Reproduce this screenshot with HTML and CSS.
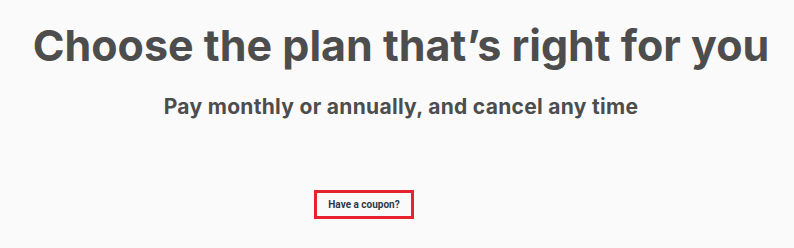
FILE: index.html
```html
<!DOCTYPE html>
<html lang="en">
<head>
  <meta charset="UTF-8" />
  <title>Pricing</title>
  <link rel="stylesheet" href="styles.css">
</head>
<body>
  <div class="pricing-header">
    <h1>Choose the plan that’s right for you</h1>
    <p class="subtitle">Pay monthly or annually, and cancel any time</p>
  </div>
  <div class="coupon-row">
    <a href="#" class="coupon-link">Have a coupon?</a>
  </div>
</body>
</html>
```

FILE: styles.css
```css
body {
  margin: 0;
  background-color: #fafafa;
  font-family: Inter, "Noto Sans", sans-serif;
  color: #4d4d4d;
}
.pricing-header {
  text-align: center;
  padding: 17px 0 0 8px;
}
.pricing-header h1 {
  margin: 0;
  font-size: 43px;
  font-weight: 700;
  line-height: 56px;
}
.subtitle {
  margin: 20px 0 0 0;
  font-size: 21px;
  font-weight: 700;
  letter-spacing: 0.3px;
  line-height: 28px;
}
.coupon-row {
  padding: 69px 0 0 314px;
}
.coupon-link {
  display: inline-block;
  width: 100px;
  height: 29px;
  box-sizing: border-box;
  border: 3px solid #e8212e;
  font-family: Roboto, sans-serif;
  font-size: 10px;
  font-weight: 700;
  line-height: 23px;
  text-align: center;
  color: #2d3748;
  text-decoration: none;
}
```
